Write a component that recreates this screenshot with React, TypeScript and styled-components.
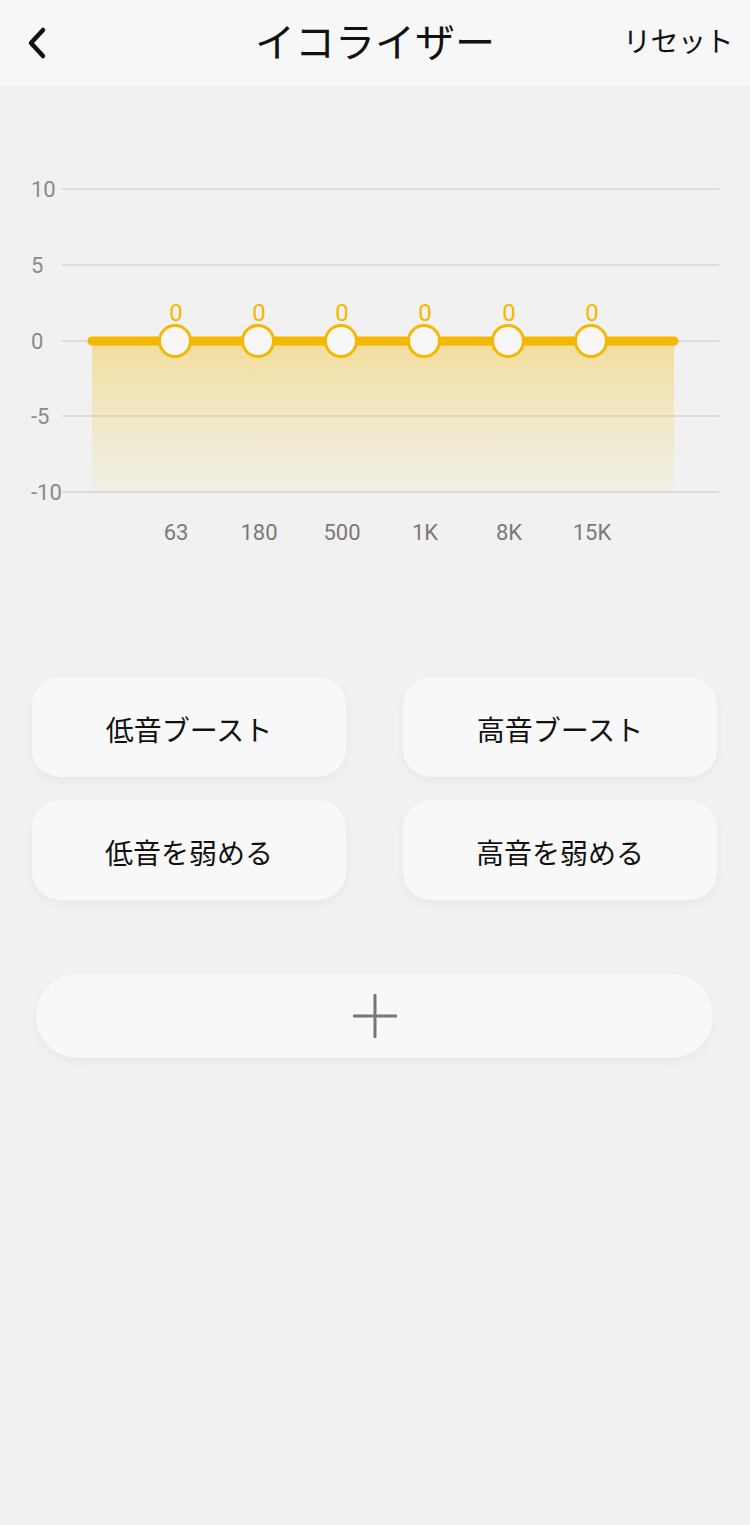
import styled, { createGlobalStyle } from 'styled-components';

const GlobalStyle = createGlobalStyle`
  html, body {
    margin: 0;
    padding: 0;
    background: #f1f1f1;
  }
  body {
    font-family: "Noto Sans CJK JP", "Noto Sans", Roboto, sans-serif;
    color: #111;
  }
`;

const Page = styled.div`
  width: 750px;
  min-height: 1525px;
  background: #f1f1f1;
  display: flex;
  flex-direction: column;
`;

const Header = styled.header`
  height: 86px;
  background: #f7f7f7;
  display: grid;
  grid-template-columns: 150px 1fr 150px;
  align-items: center;
`;

const BackButton = styled.button`
  border: none;
  background: none;
  padding: 0 0 0 23px;
  height: 86px;
  display: flex;
  align-items: center;
  justify-content: flex-start;
  cursor: pointer;
`;

const Title = styled.h1`
  margin: 0;
  text-align: center;
  font-size: 40px;
  font-weight: 400;
  padding-bottom: 6px;
`;

const ResetLink = styled.button`
  border: none;
  background: none;
  font-family: inherit;
  font-size: 28px;
  color: #111;
  text-align: right;
  padding: 0 17px 6px 0;
  letter-spacing: -0.5px;
  white-space: nowrap;
  cursor: pointer;
`;

const ChartWrap = styled.section`
  height: 474px;
`;

const PresetGrid = styled.div`
  margin: 117px 33px 0 32px;
  display: grid;
  grid-template-columns: 314px 314px;
  column-gap: 57px;
  row-gap: 23px;
`;

const PresetButton = styled.button`
  height: 100px;
  border: none;
  border-radius: 28px;
  background: #f8f8f8;
  box-shadow: 0 4px 10px rgba(0, 0, 0, 0.04);
  font-family: inherit;
  font-size: 28px;
  color: #111;
  padding-top: 5px;
  cursor: pointer;
`;

const AddButton = styled.button`
  margin: 74px 37px 0 36px;
  height: 84px;
  border: none;
  border-radius: 42px;
  background: #f8f8f8;
  box-shadow: 0 4px 10px rgba(0, 0, 0, 0.04);
  display: flex;
  align-items: center;
  justify-content: center;
  cursor: pointer;
`;

const YELLOW = '#f5b800';
const bands = ['63', '180', '500', '1K', '8K', '15K'];
const bandX = [175, 258, 341, 424, 508, 591];
const gridY = [103, 179, 255, 330, 406];
const yLabels = ['10', '5', '0', '-5', '-10'];

const EqChart = () => (
  <svg width="750" height="474" viewBox="0 0 750 474">
    <defs>
      <linearGradient id="eqFill" x1="0" y1="0" x2="0" y2="1">
        <stop offset="0" stopColor={YELLOW} stopOpacity="0.36" />
        <stop offset="1" stopColor="#f0d860" stopOpacity="0.08" />
      </linearGradient>
    </defs>
    {gridY.map((y, i) => (
      <g key={y}>
        <line x1="62" x2="719" y1={y} y2={y} stroke="#d4d4d4" strokeWidth="1.5" />
        <text x="31" y={y + 8} fontFamily="Roboto, sans-serif" fontSize="22" fill="#8a8a8a">
          {yLabels[i]}
        </text>
      </g>
    ))}
    <rect x="92" y="255" width="582" height="151" fill="url(#eqFill)" />
    <line x1="92" x2="674" y1="255" y2="255" stroke={YELLOW} strokeWidth="9" strokeLinecap="round" />
    {bandX.map((x, i) => (
      <g key={bands[i]}>
        <text x={x + 1} y="235" textAnchor="middle" fontFamily="Roboto, sans-serif" fontSize="24" fill={YELLOW}>
          0
        </text>
        <circle cx={x} cy="255" r="15.5" fill="#f7f7f7" stroke={YELLOW} strokeWidth="3" />
        <text x={x + 1} y="454" textAnchor="middle" fontFamily="Roboto, sans-serif" fontSize="22" fill="#7a7a7a">
          {bands[i]}
        </text>
      </g>
    ))}
  </svg>
);

const presets = ['低音ブースト', '高音ブースト', '低音を弱める', '高音を弱める'];

export default function App() {
  return (
    <Page>
      <GlobalStyle />
      <Header>
        <BackButton aria-label="back">
          <svg width="28" height="34" viewBox="0 0 28 34">
            <path d="M20 4 L8 17 L20 30" fill="none" stroke="#111" strokeWidth="4.5" strokeLinecap="round" strokeLinejoin="round" />
          </svg>
        </BackButton>
        <Title>イコライザー</Title>
        <ResetLink>リセット</ResetLink>
      </Header>
      <ChartWrap>
        <EqChart />
      </ChartWrap>
      <PresetGrid>
        {presets.map((p) => (
          <PresetButton key={p}>{p}</PresetButton>
        ))}
      </PresetGrid>
      <AddButton aria-label="add">
        <svg width="44" height="44" viewBox="0 0 44 44">
          <path d="M22 1 V43 M1 22 H43" stroke="#777" strokeWidth="3" strokeLinecap="round" />
        </svg>
      </AddButton>
    </Page>
  );
}
